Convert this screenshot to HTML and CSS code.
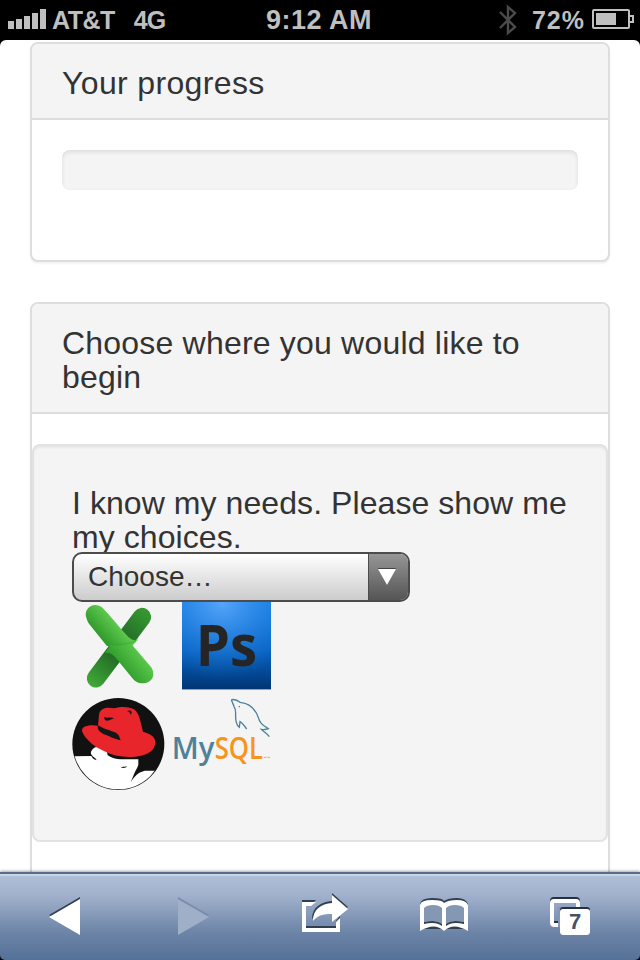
FILE: index.html
```html
<!DOCTYPE html>
<html lang="en">
<head>
<meta charset="utf-8">
<title>Your progress</title>
<link rel="stylesheet" href="styles.css">
</head>
<body>
<header class="status">
  <div class="carrier">
    <svg class="signal" width="38" height="20" viewBox="0 0 38 20"><path d="M0 12h6v8H0zM8 10h6v10H8zM16 7h6v13h-6zM24 4h6v16h-6zM32 0h6v20h-6z"/></svg>
    <span class="name">AT&amp;T</span><span class="network">4G</span>
  </div>
  <div class="clock">9:12 AM</div>
  <div class="power">
    <svg class="bluetooth" width="18" height="32" viewBox="0 0 18 32"><path d="M1 8l15 15-7 6V3l7 6L1 24"/></svg>
    <span class="percent">72%</span>
    <svg class="battery" width="42" height="20" viewBox="0 0 42 20"><rect x="1" y="1" width="36" height="18" rx="1"/><path d="M38 7h3v6h-3"/><path class="charge" d="M4 4h20v12H4z"/></svg>
  </div>
</header>
<main class="page">
  <section class="panel progress-panel">
    <h3 class="heading">Your progress</h3>
    <div class="progress-body"><div class="progress"></div></div>
  </section>
  <section class="panel choice-panel">
    <h3 class="heading">Choose where you would like to begin</h3>
    <div class="well">
      <p class="prompt">I know my needs. Please show me my choices.</p>
      <div class="select"><span class="value">Choose…</span><span class="arrow"><svg width="20" height="18" viewBox="0 0 20 18"><path d="M1 0h18l-9 17z" fill="#444"/><path d="M1 1h18l-9 16z" fill="#fff"/></svg></span></div>
      <div class="logos">
        <svg class="excel" width="80" height="88" viewBox="0 6 240 264">
          <defs>
            <linearGradient id="g1" gradientUnits="userSpaceOnUse" x1="30" y1="250" x2="200" y2="40"><stop offset="0" stop-color="#3fa836"/><stop offset=".38" stop-color="#256f27"/><stop offset=".7" stop-color="#26752a"/><stop offset="1" stop-color="#35962f"/></linearGradient>
            <linearGradient id="g2" gradientUnits="userSpaceOnUse" x1="60" y1="120" x2="110" y2="75"><stop offset="0" stop-color="#2c9629"/><stop offset="1" stop-color="#5cc74c"/></linearGradient>
            <linearGradient id="g3" gradientUnits="userSpaceOnUse" x1="120" y1="205" x2="175" y2="160"><stop offset="0" stop-color="#2f9b2c"/><stop offset="1" stop-color="#57c548"/></linearGradient>
          </defs>
          <path d="M186 51L48 235" stroke="url(#g1)" stroke-width="55" stroke-linecap="round"/>
          <path d="M20 56C8 28 38 2 66 22c28 28 51 60 80 90 10 8 18 11 28 7l-20 21-54 3-20-6-50-62c-4-4-8-13-10-19z" fill="url(#g2)"/>
          <path d="M74 159l18-24c22 5 44 2 64-1l57 67c20 30-6 57-38 47-8-4-14-8-19-15l-44-54c-12-16-22-21-38-20z" fill="url(#g3)"/>
          <path d="M92 136c24-4 45-2 63-9 8-3 14-7 19-12" fill="none" stroke="#35a532" stroke-width="2"/>
        </svg>
        <svg class="photoshop" width="89" height="88" viewBox="366 21 267 264">
          <defs><radialGradient id="sky" cx=".45" cy="0" r=".9"><stop offset="0" stop-color="#58a6fa"/><stop offset="1" stop-color="#187cdf" stop-opacity="0"/></radialGradient><linearGradient id="blue" x1="0" y1="0" x2="0" y2="1"><stop offset="0" stop-color="#187fe4"/><stop offset=".55" stop-color="#0862c2"/><stop offset="1" stop-color="#003574"/></linearGradient></defs>
          <rect x="366" y="21" width="267" height="261" fill="url(#blue)"/><rect x="366" y="21" width="267" height="261" fill="url(#sky)"/><path d="M366 282h267v3H366z" fill="#9da1a9"/>
          <text class="ps-text" x="407" y="213" textLength="184" lengthAdjust="spacingAndGlyphs">Ps</text>
        </svg>
        <svg class="redhat" width="93" height="92" viewBox="12 12 279 276">
          <defs><clipPath id="disc"><circle cx="151" cy="150" r="136"/></clipPath></defs>
          <circle cx="151" cy="150" r="138" fill="#111"/>
          <g clip-path="url(#disc)">
            <path d="M12 187l58-1c6 9 9 13 16 11-7-8-22-14-16-26 8-13 18-15 28-8 10-1 16 4 19 11l2 10c12 8 25 12 39 12h53v16c-3 10-9 18-13 29l-10 24c8-13 16-23 26-29l16-6h68v70H12z" fill="#fff"/>
            <path d="M90 95l3-33c4-24 30-22 46-19 23-7 47-4 61 4 16 15 18 40 25 66 25 7 39 17 37 36-5 27-33 36-61 39-35 3-67-3-95-18-32-13-58-40-64-59-3-14 20-21 48-16z" fill="#e7252a"/>
            <path d="M90 94c14 9 30 14 46 19 13 4 18 11 22 26-13-3-24-7-36-13-20-6-37-16-32-32zM108 69c11 5 19-1 31 4-8 1-18 11-28 5zM177 51c12-5 18 2 11 12-1-7-4-9-11-12z" fill="#161616"/>
            <path d="M157 218c6 2 11 0 20-1-4 7-14 6-20 1z" fill="#222"/>
          </g>
        </svg>
        <svg class="mysql" width="100" height="70" viewBox="12 12 300 210">
          <text class="my" x="11" y="194" textLength="128" lengthAdjust="spacingAndGlyphs">My</text><text class="sql" x="140" y="194" textLength="145" lengthAdjust="spacingAndGlyphs">SQL</text>
          <path d="M288 190h7m3 0h8" stroke="#f4a44b" stroke-width="3"/>
          <path d="M190 17c12-2 18 1 26 8 30 3 48 23 56 48 3 12 7 16 17 23l12 8c-7 3-15 3-21 2 7 8 17 12 24 22M190 17l8 20c10 15 1 28 7 48 2 8 5 12 9 15l2-17c8 5 13 12 20 22M214 36v4" fill="none" stroke="#4b819d" stroke-width="4"/>
        </svg>
      </div>
    </div>
  </section>
</main>
<nav class="toolbar">
  <svg class="back" width="32" height="40" viewBox="0 0 32 40"><path d="M0 19L31 1v36z" fill="#354255"/><path d="M0 21L31 3v36z" fill="#fff"/></svg>
  <svg class="forward" width="32" height="40" viewBox="0 0 32 40"><path d="M0 1l31 18L0 37z" fill="#788ba8"/><path d="M0 3l31 18L0 39z" fill="#9eafc7"/></svg>
  <svg class="share" width="48" height="40" viewBox="0 0 48 40"><path d="M0 4h14l-5 5H4v21h30v-5l4-5v14H0z" fill="#303f52"/><path d="M0 6h14l-5 4H4v22h30v-6l4-4v12H0z" fill="#fff"/><path d="M4 30h30v2H4z" fill="#303f52"/><path d="M0 32h38v4H0z" fill="#fff"/><path d="M30-3l16 14-16 13v-8c-10 0-15 1-20 7 0-12 9-17 20-18z" fill="#303f52"/><path d="M30-1l16 14-16 13v-8c-9 0-14 1-19 7 0-12 8-17 19-18z" fill="#fff"/></svg>
  <svg class="book" width="48" height="40" viewBox="0 0 48 40"><path d="M0 8Q1 2 12 2t12 3q4-3 13-3t11 6v25H0z" fill="#303f52"/><path d="M0 9Q1 4 12 4t12 3q4-3 13-3t11 5v26q-15-9-24 0-9-9-24 0z" fill="#fff"/><path d="M4 12q3-3 9-3 6 0 9 3v16q-7-5-18-2zM26 12q3-3 9-3 6 0 9 3v14q-11-3-18 2z" fill="#8497b3"/><path d="M4 26q12-3 18 2v2q-6-5-18-2zM26 28q6-5 18-2v2q-12-3-18 2z" fill="#303f52"/></svg>
  <svg class="tabs" width="42" height="40" viewBox="0 0 42 40"><g fill="none" stroke-width="4"><rect x="2" y="4" width="26" height="26" rx="2" stroke="#26323f"/><rect x="2" y="6" width="26" height="24" rx="2" stroke="#fff"/></g><path d="M4 26h4v2H4z" fill="#26323f"/><path d="M8 12h16v1H10v19H8z" fill="#8497b4"/><rect x="10" y="12" width="30" height="28" rx="3" fill="#26323f"/><rect x="10" y="14" width="30" height="26" rx="3" fill="#fff"/><text class="tab-count" x="25" y="34">7</text></svg>
</nav>
</body>
</html>
```
FILE: styles.css
```css
* { box-sizing: border-box; }
body { margin: 0; width: 640px; height: 960px; overflow: hidden; display: flex; flex-direction: column; background: #000; color: #333; font-family: "Liberation Sans", Arial, sans-serif; }
svg { display: block; flex: none; overflow: visible; }
.status { height: 40px; flex: none; display: grid; grid-template-columns: 240px 1fr 240px; color: #bfbfbf; font-size: 25px; line-height: 40px; font-weight: bold; }
.carrier, .power { display: flex; align-items: center; white-space: nowrap; }
.carrier { padding-left: 8px; }
.signal { fill: #bfbfbf; margin-top: -2px; }
.name { margin-left: 6px; letter-spacing: -.5px; }
.network { margin-left: 19px; letter-spacing: -1px; }
.clock { text-align: center; font-size: 27px; letter-spacing: .5px; padding-right: 2px; }
.power { justify-content: flex-end; padding-right: 6px; }
.bluetooth { fill: none; stroke: #4b4b4b; stroke-width: 2.4; }
.percent { margin: 0 7px 0 15px; letter-spacing: 1px; }
.battery { fill: none; stroke: #bfbfbf; stroke-width: 2; margin-top: -2px; }
.charge { fill: #bfbfbf; stroke: none; }
.page { flex: 1; min-height: 0; overflow: hidden; background: #fff; border-radius: 6px 6px 0 0; padding: 2px 30px 0; }
.panel { border: 2px solid #ddd; border-radius: 8px; box-shadow: 0 2px 2px rgba(0,0,0,.05); background: #fff; }
.progress-panel { height: 220px; margin-bottom: 40px; }
.choice-panel { height: 700px; }
.heading { margin: 0; padding: 22px 30px 18px; border-bottom: 2px solid #ddd; border-radius: 6px 6px 0 0; background: #f4f4f4; font-size: 32px; line-height: 34px; font-weight: normal; letter-spacing: .2px; }
.progress-panel .heading { letter-spacing: .35px; }
.progress-body { padding: 30px; }
.progress { height: 40px; border-radius: 8px; background: #f4f4f4; box-shadow: inset 0 2px 4px rgba(0,0,0,.1); }
.well { margin-top: 30px; height: 398px; padding: 40px 38px; border: 2px solid #e2e2e2; border-radius: 8px; background: #f4f4f4; box-shadow: inset 0 2px 2px rgba(0,0,0,.05); }
.prompt { margin: 0 0 -2px; font-size: 32px; line-height: 34px; letter-spacing: .07px; }
.select { position: relative; width: 338px; height: 50px; display: flex; overflow: hidden; border: 2px solid #4c4c4c; border-radius: 10px; background: linear-gradient(#fff, #ccc); }
.value { flex: 1; padding-left: 14px; font-size: 28px; line-height: 46px; }
.arrow { width: 40px; border-left: 1px solid #4c4c4c; background: linear-gradient(#969696, #555); display: grid; place-items: center; padding-right: 3px; }
.logos { display: grid; grid-template-columns: 100px 101px; grid-template-rows: 96px 92px; }
.excel { margin-left: 8px; }
.photoshop { margin-left: 10px; }
.ps-text { font: bold 174px "Open Sans", sans-serif; fill: #252525; }
.my, .sql { font: 600 92px "Open Sans", sans-serif; }
.my { fill: #50819b; }
.sql { fill: #f7941d; }
.toolbar { height: 88px; flex: none; position: relative; display: flex; padding: 22px 0 0 49px; border-top: 2px solid #586c8b; background: linear-gradient(#cbd6e5 0 2px, #afbfd8 2px, #a1b1cc 25%, #6b83a6 69%, #557199); box-shadow: 0 -1px 3px rgba(0,0,0,.35); border-radius: 0 0 5px 5px; }
.forward { margin-left: 97px; }
.share { margin-left: 92px; }
.book { margin-left: 70px; }
.tabs { margin-left: 82px; margin-top: -1px; }
.tab-count { font-size: 22px; font-weight: bold; text-anchor: middle; fill: #435269; }
```
